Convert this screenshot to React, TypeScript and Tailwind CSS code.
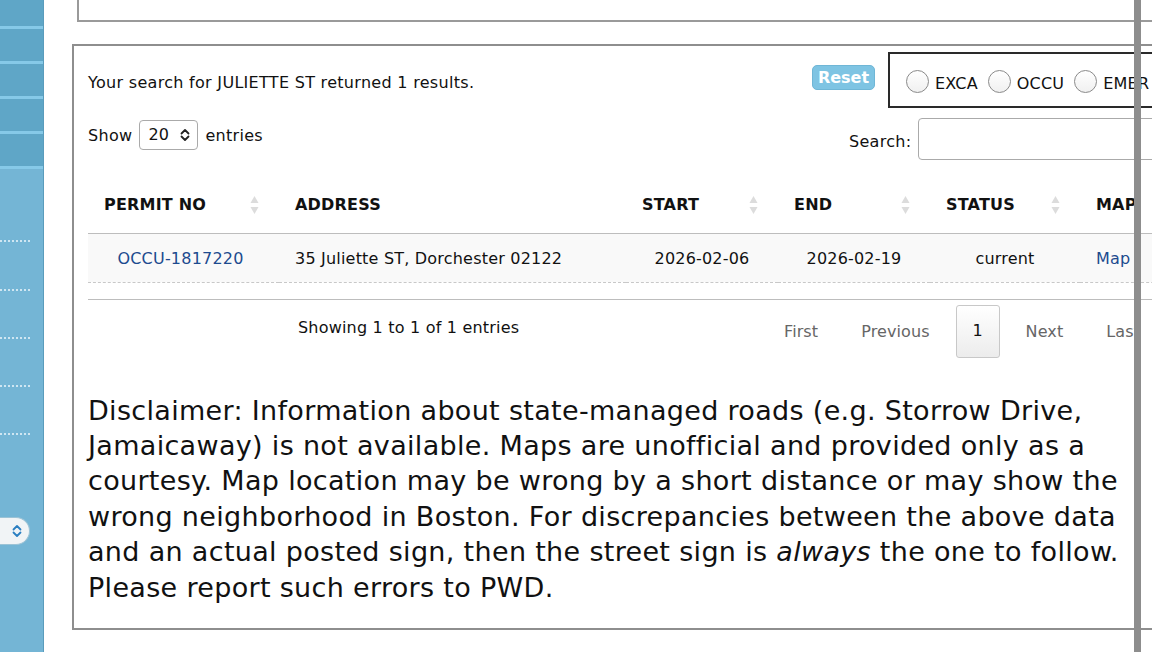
import React from "react";

const font = { fontFamily: '"DejaVu Sans", Verdana, sans-serif' };

function SortArrows() {
  return (
    <svg width="9" height="20" viewBox="0 0 9 20" className="shrink-0">
      <path d="M4.5 1 L8.5 8 L0.5 8 Z" fill="#dcdcdc" />
      <path d="M4.5 19 L8.5 12 L0.5 12 Z" fill="#dcdcdc" />
    </svg>
  );
}

function UpDown({ color = "#222", size = 12 }: { color?: string; size?: number }) {
  return (
    <svg width={size} height={size + 2} viewBox="0 0 12 14">
      <path
        d="M2.5 5.5 L6 2 L9.5 5.5 M2.5 8.5 L6 12 L9.5 8.5"
        fill="none"
        stroke={color}
        strokeWidth="1.8"
        strokeLinecap="round"
        strokeLinejoin="round"
      />
    </svg>
  );
}

function Radio({ label }: { label: string }) {
  return (
    <div className="flex items-center shrink-0">
      <span className="w-[23px] h-[23px] rounded-full border-[1.5px] border-[#8a8a8a] bg-gradient-to-b from-white to-[#f0f0f0]" />
      <span className="ml-[6px] mt-[5px] text-[16px] tracking-[0.2px] text-[#111]">{label}</span>
    </div>
  );
}

function Sidebar() {
  const items = [0, 1, 2, 3];
  return (
    <div className="w-[44px] shrink-0 h-full flex flex-col bg-[#74b5d5] border-r border-[#5a9cbc]">
      <div className="bg-[#5fa6c7] flex flex-col">
        <div className="h-[26px]" />
        {items.map((i) => (
          <React.Fragment key={i}>
            <div className="h-[3px] bg-[#86c9e8]" />
            <div className="h-[32px]" />
          </React.Fragment>
        ))}
        <div className="h-[3px] bg-[#86c9e8]" />
      </div>
      <div className="flex flex-col">
        <div className="mt-[71px] w-[30px] border-t-2 border-dotted border-[#cfe6f2]" />
        <div className="mt-[47px] w-[30px] border-t-2 border-dotted border-[#cfe6f2]" />
        <div className="mt-[46px] w-[30px] border-t-2 border-dotted border-[#cfe6f2]" />
        <div className="mt-[46px] w-[30px] border-t-2 border-dotted border-[#cfe6f2]" />
        <div className="mt-[46px] w-[30px] border-t-2 border-dotted border-[#cfe6f2]" />
        <div className="mt-[82px] w-[30px] h-[28px] rounded-r-full bg-[#f1f4f6] border border-l-0 border-[#9cc3d6] flex items-center justify-end pr-[6px]">
          <UpDown color="#2b7fc1" size={12} />
        </div>
      </div>
    </div>
  );
}

export default function App() {
  const cols = [
    { label: "PERMIT NO", w: "w-[191px]", sort: true },
    { label: "ADDRESS", w: "w-[347px]", sort: false },
    { label: "START", w: "w-[152px]", sort: true },
    { label: "END", w: "w-[152px]", sort: true },
    { label: "STATUS", w: "w-[150px]", sort: true },
    { label: "MAP", w: "w-[120px]", sort: false },
  ];

  return (
    <div
      className="relative w-[1152px] h-[652px] overflow-hidden bg-white flex text-[#111]"
      style={font}
    >
      <Sidebar />

      <div className="flex flex-col pl-[28px] w-[1300px] shrink-0">
        <div className="ml-[5px] h-[22px] w-[1200px] border-l-2 border-b-2 border-[#9a9a9a]" />

        <div className="mt-[22px] w-[1200px] border-2 border-[#8e8e8e] pl-[14px] pb-[23px]">
          {/* search summary + filters */}
          <div className="mt-[6px] flex items-center h-[56px]">
            <div className="w-[724px] shrink-0 text-[16px] tracking-[0.3px] pt-[5px]">
              Your search for JULIETTE ST returned 1 results.
            </div>
            <button className="w-[63px] h-[25px] shrink-0 -mt-[5px] rounded-[5px] bg-[#7ec4e3] border border-[#6fb6d6] text-white font-bold text-[16px] leading-none">
              Reset
            </button>
            <div className="ml-[13px] h-[56px] w-[320px] shrink-0 border-l-2 border-t-2 border-b-2 border-[#2a2a2a] flex items-center gap-[10px] pl-[16px] pt-[2px]">
              <Radio label="EXCA" />
              <Radio label="OCCU" />
              <Radio label="EMER" />
            </div>
          </div>

          {/* show / search */}
          <div className="mt-[10px] flex items-start h-[42px]">
            <div className="w-[761px] shrink-0 flex items-center h-[30px] mt-[2px] text-[16px] tracking-[0.3px]">
              <span className="pt-[1px]">Show</span>
              <div className="ml-[7px] w-[59px] h-[30px] rounded-[4px] border border-[#aaa] flex items-center pl-[8px] pr-[6px] justify-between">
                <span className="text-[16px]">20</span>
                <UpDown />
              </div>
              <span className="ml-[7px] pt-[1px]">entries</span>
            </div>
            <span className="mt-[12px] text-[16px] tracking-[0.3px]">Search:</span>
            <div className="ml-[7px] w-[300px] h-[42px] rounded-[4px] border border-[#aaa] shrink-0" />
          </div>

          {/* table */}
          <table className="mt-[20px] table-fixed border-collapse text-[16px] tracking-[0.2px]">
            <thead>
              <tr className="h-[53px] border-b border-[#bdbdbd]">
                {cols.map((c) => (
                  <th key={c.label} className={`${c.w} p-0 text-left font-bold`}>
                    <div className="flex items-center justify-between pl-[16px] pr-[20px] pb-[2px]">
                      <span>{c.label}</span>
                      {c.sort && <SortArrows />}
                    </div>
                  </th>
                ))}
              </tr>
            </thead>
            <tbody>
              <tr className="h-[49px] bg-[#f9f9f9] border-b border-dashed border-[#c8c8c8]">
                <td className="text-center text-[#1d4b8f] pr-[6px] pt-[3px]">OCCU-1817220</td>
                <td className="pl-[16px] pt-[3px]">35 Juliette ST, Dorchester 02122</td>
                <td className="text-center pt-[3px]">2026-02-06</td>
                <td className="text-center pt-[3px]">2026-02-19</td>
                <td className="text-center pt-[3px]">current</td>
                <td className="pl-[16px] text-[#1d4b8f] pt-[3px]">Map</td>
              </tr>
            </tbody>
          </table>
          <div className="h-[17px] border-b border-[#bdbdbd]" />

          {/* info + pagination */}
          <div className="flex items-start">
            <div className="w-[679px] shrink-0 pl-[210px] mt-[16px] text-[16px] tracking-[0.2px]">
              Showing 1 to 1 of 1 entries
            </div>
            <div className="mt-[5px] flex items-center gap-[9px] text-[16px] tracking-[0.1px] text-[#666]">
              <span className="px-[17px] pt-[2px]">First</span>
              <span className="px-[17px] pt-[2px]">Previous</span>
              <span className="w-[44px] h-[53px] flex items-center justify-center rounded-[3px] border border-[#c8c8c8] bg-gradient-to-b from-white to-[#ececec] text-[#111]">
                1
              </span>
              <span className="px-[17px] pt-[2px]">Next</span>
              <span className="px-[17px] pt-[2px]">Last</span>
            </div>
          </div>

          {/* disclaimer */}
          <p className="mt-[35px] text-[27px] tracking-[0.32px] leading-[35.4px] text-[#111]">
            Disclaimer: Information about state-managed roads (e.g. Storrow Drive,
            <br />
            Jamaicaway) is not available. Maps are unofficial and provided only as a
            <br />
            courtesy. Map location may be wrong by a short distance or may show the
            <br />
            wrong neighborhood in Boston. For discrepancies between the above data
            <br />
            and an actual posted sign, then the street sign is <em>always</em> the one to follow.
            <br />
            Please report such errors to PWD.
          </p>
        </div>
      </div>

      {/* scrollbar-like divider lying over the page */}
      <div className="absolute left-[1134px] top-0 w-[7px] h-full bg-[#8d8d8d]" />
    </div>
  );
}
